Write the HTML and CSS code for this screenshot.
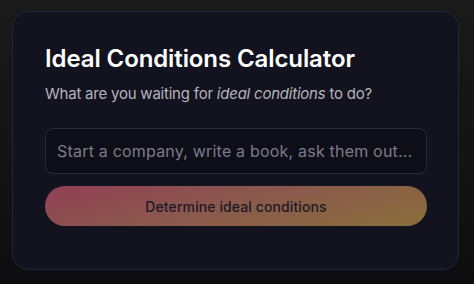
FILE: index.html
```html
<!DOCTYPE html>
<html>
<head>
<meta charset="utf-8">
<link rel="stylesheet" href="styles.css">
</head>
<body>
<div class="card">
  <h1 class="title">Ideal Conditions Calculator</h1>
  <p class="subtitle">What are you waiting for <em>ideal conditions</em> to do?</p>
  <input class="field" type="text" placeholder="Start a company, write a book, ask them out...">
  <button class="btn">Determine ideal conditions</button>
</div>
</body>
</html>
```
FILE: styles.css
```css
html, body {
  margin: 0;
  padding: 0;
}
body {
  width: 474px;
  height: 284px;
  background: linear-gradient(180deg, #1a1a1a 0%, #131313 60%, #0d0d0f 100%);
  font-family: Inter, "Noto Sans", sans-serif;
  overflow: hidden;
  padding-top: 11px;
  padding-left: 12px;
  box-sizing: border-box;
}
.card {
  width: 447px;
  height: 259px;
  box-sizing: border-box;
  background: #13131f;
  border: 1px solid #24243a;
  border-radius: 16px;
  padding: 32px 31px 0 32px;
  display: flex;
  flex-direction: column;
}
.title {
  margin: 0;
  font-size: 24px;
  line-height: 30px;
  font-weight: 600;
  color: #ffffff;
  letter-spacing: -0.1px;
}
.subtitle {
  margin: 9px 0 0 0;
  font-size: 15px;
  line-height: 22px;
  color: #b4b4bc;
  letter-spacing: -0.22px;
}
.subtitle em {
  font-style: italic;
}
.field {
  margin-top: 23px;
  height: 46px;
  width: 382px;
  box-sizing: border-box;
  background: #0e0e19;
  border: 1px solid #2a2a3c;
  border-radius: 8px;
  padding: 0 11px;
  font-family: inherit;
  font-size: 16px;
  letter-spacing: 0.2px;
  color: #e0e0e0;
  outline: none;
}
.field::placeholder {
  color: #7c7c88;
}
.btn {
  margin-top: 12px;
  height: 40px;
  width: 382px;
  border: none;
  border-radius: 20px;
  background: linear-gradient(165deg, #913f55 0%, #8a5a4c 50%, #8a6f3a 100%);
  font-family: inherit;
  font-size: 14px;
  font-weight: 500;
  letter-spacing: 0.1px;
  color: #1c1a28;
  cursor: pointer;
}
```
